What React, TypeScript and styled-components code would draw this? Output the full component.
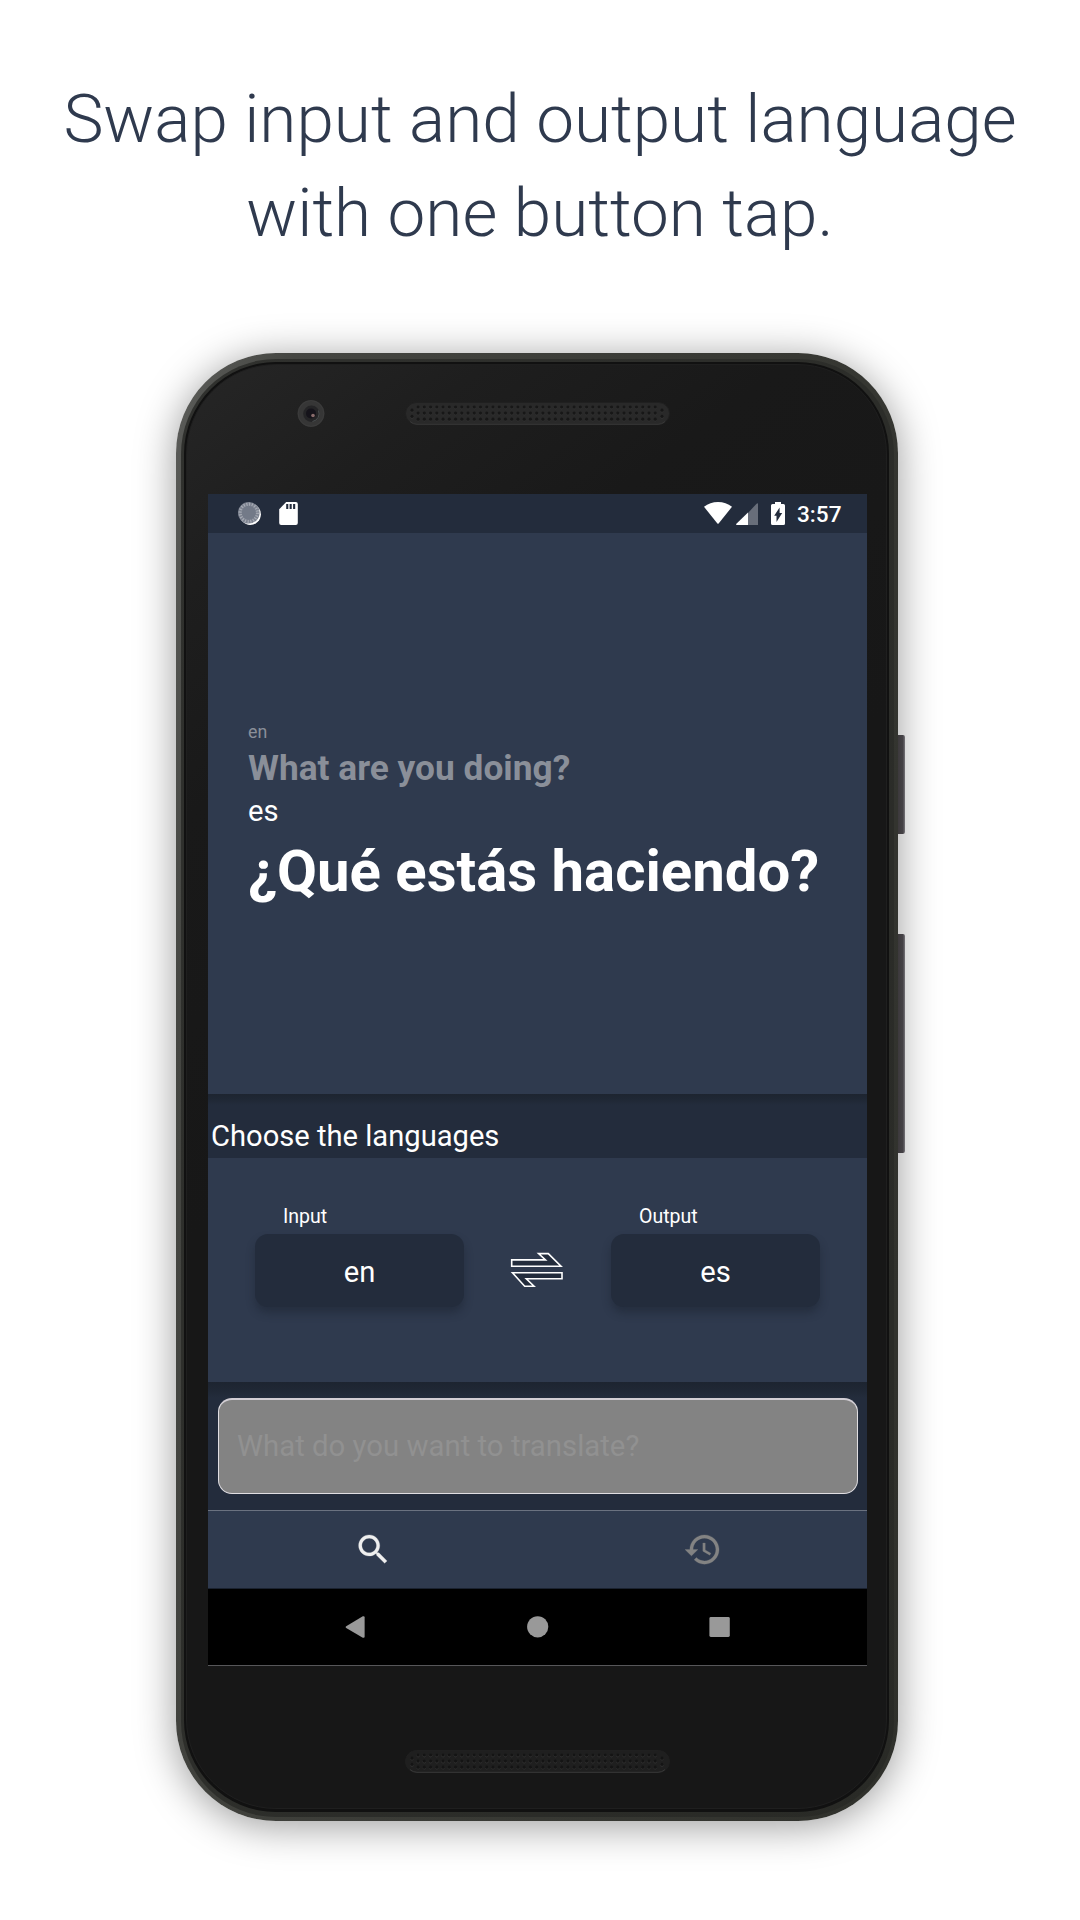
import React from 'react';
import styled, { createGlobalStyle } from 'styled-components';

const navy = '#2f3a4e';
const deep = '#232c3c';

const GlobalStyle = createGlobalStyle`
  * { box-sizing: border-box; }
  body { margin: 0; background: #fff; font-family: Roboto, "Liberation Sans", sans-serif; }
  svg { display: block; flex: none; }
`;

const Page = styled.main`
  width: 1080px;
  height: 1920px;
  overflow: hidden;
  background: #fff;
  display: flex;
  flex-direction: column;
`;

const Headline = styled.h1`
  margin: 0;
  height: 353px;
  padding-top: 72px;
  font-size: 67.45px;
  line-height: 94px;
  font-weight: 300;
  color: ${navy};
  text-align: center;
  white-space: nowrap;
`;

const Device = styled.div`
  display: flex;
  align-items: flex-start;
  padding-left: 176px;
`;

const Rim = styled.div`
  width: 722px;
  height: 1468px;
  padding: 6px 4px 4px 5px;
  border-radius: 100px;
  background: linear-gradient(100deg, #5c5d5a 0%, #454642 12%, #3a3b36 50%, #2f302b 100%);
  box-shadow: 0 5px 40px rgba(0, 0, 0, 0.4);
`;

const RimInner = styled.div`
  height: 100%;
  padding: 3px 5px 5px 3px;
  border-radius: 95px;
  background: linear-gradient(110deg, #30312e, #292a26);
`;

const Groove = styled.div`
  height: 100%;
  padding: 2px 2px 3px 2px;
  border-radius: 92px;
  background: #111;
`;

const Face = styled.div`
  height: 100%;
  border-radius: 90px;
  border: 1px solid #1f1f1f;
  background: linear-gradient(143deg, #262626 0, #1e1e1e 180px, #191919 360px, #171717 700px);
  display: flex;
  flex-direction: column;
`;

const TopBezel = styled.div`
  height: 129px;
  flex: none;
  display: flex;
  align-items: flex-start;
  padding: 35px 0 0 110px;
`;

const TopSpeakerSlot = styled.div`
  padding: 2px 0 0 80px;
`;

const BottomBezel = styled.div`
  flex: 1;
  padding: 84px 0 0 218px;
`;

const SideKeys = styled.div`
  display: flex;
  flex-direction: column;
  gap: 100px;
  padding-top: 382px;
`;

const SideKey = styled.div<{ $height: number }>`
  width: 7px;
  height: ${(p) => p.$height}px;
  border-radius: 0 2px 2px 0;
  background: linear-gradient(90deg, #3c393c 0, #454246 70%, #77757a 100%);
`;

const Screen = styled.div`
  width: 659px;
  height: 1172px;
  flex: none;
  margin-left: 21px;
  background: ${navy};
  display: flex;
  flex-direction: column;
  color: #fff;
`;

const StatusBar = styled.div`
  height: 39px;
  flex: none;
  background: ${deep};
  display: flex;
  align-items: flex-start;
  justify-content: space-between;
  padding: 8px 25px 0 30px;
`;

const StatusGroup = styled.div<{ $gap: number }>`
  display: flex;
  align-items: flex-start;
  gap: ${(p) => p.$gap}px;
`;

const Clock = styled.span`
  width: 45px;
  margin-left: 8px;
  padding-top: 1px;
  font-size: 22.6px;
  line-height: 24px;
  font-weight: 500;
  white-space: nowrap;
`;

const Translation = styled.section`
  height: 561px;
  flex: none;
  padding: 189px 0 0 40px;
  display: flex;
  flex-direction: column;
  white-space: nowrap;
`;

const SourceLang = styled.span`
  font-size: 17.8px;
  line-height: 20px;
  color: #8a8f99;
`;

const SourceText = styled.strong`
  margin-top: 5px;
  font-size: 35.3px;
  line-height: 42px;
  font-weight: 700;
  color: #8a8f99;
`;

const TargetLang = styled.span`
  margin-top: 5px;
  font-size: 29.2px;
  line-height: 34px;
`;

const TargetText = styled.strong`
  margin-top: 9px;
  font-size: 58.1px;
  line-height: 68px;
  font-weight: 700;
`;

const SectionTitle = styled.h2`
  margin: 0;
  height: 64px;
  flex: none;
  padding: 25px 0 0 3px;
  font-size: 29.15px;
  line-height: 34px;
  font-weight: 400;
  background: linear-gradient(#1d2430 0, #1f2734 5px, ${deep} 11px);
`;

const Languages = styled.section`
  height: 224px;
  flex: none;
  display: flex;
  justify-content: space-between;
  padding: 47px 47px 0 47px;
`;

const LanguageField = styled.div`
  width: 209px;
`;

const FieldLabel = styled.div`
  height: 29px;
  padding-left: 28px;
  font-size: 19.5px;
  line-height: 23px;
`;

const LanguageButton = styled.button`
  display: block;
  width: 100%;
  height: 73px;
  padding: 3px 0 0 0;
  border: 0;
  border-radius: 13px;
  background: ${deep};
  box-shadow: 0 6px 9px rgba(24, 30, 42, 0.42);
  color: #fff;
  font: 400 29.2px/34px Roboto, "Liberation Sans", sans-serif;
`;

const SwapButton = styled.button`
  padding: 45px 2px 0 0;
  border: 0;
  background: none;
  display: flex;
  align-items: flex-start;
`;

const Composer = styled.div`
  height: 128px;
  flex: none;
  padding: 16px 9px 16px 10px;
  background: linear-gradient(#1d2430 0, #1f2734 7px, ${deep} 16px);
`;

const ComposerInput = styled.input`
  display: block;
  width: 640px;
  height: 96px;
  padding: 0 18px 1px;
  border: 1px solid #e0dee2;
  border-top: 2px solid #d2ced4;
  border-radius: 14px;
  background: #838383;
  font: 400 29.35px/34px Roboto, "Liberation Sans", sans-serif;
  color: #fff;
  &::placeholder { color: #919191; opacity: 1; }
`;

const Tabs = styled.nav`
  height: 79px;
  flex: none;
  display: grid;
  grid-template-columns: 1fr 1fr;
  place-items: center;
  border-top: 1px solid #6b7280;
  border-bottom: 1px solid #1b2230;
`;

const SystemNav = styled.div`
  height: 77px;
  flex: none;
  background: #000;
  border-bottom: 1px solid #57575a;
  display: grid;
  grid-template-columns: repeat(3, 182px);
  justify-content: center;
  justify-items: center;
  align-items: center;
`;

const Camera = () => (
  <svg width="28" height="28" viewBox="0 0 28 28">
    <circle cx="14" cy="13.5" r="13.4" fill="#363636" />
    <circle cx="14" cy="13.5" r="12.8" fill="none" stroke="#3e3e3e" strokeWidth="0.8" />
    <circle cx="14.4" cy="13.7" r="8.2" fill="#242426" />
    <path d="M21.5 10.5a8 8 0 0 1-6 11" fill="none" stroke="#4b4f50" strokeWidth="1" />
    <circle cx="14" cy="13.5" r="5" fill="#15131a" />
    <circle cx="16" cy="15.5" r="1.8" fill="#8a6c6c" />
  </svg>
);

const Speaker = ({ fill, hole }: { fill: string; hole: string }) => {
  const holes: [number, number][] = [[7, 8.2], [7, 14.3], [257, 8.2], [257, 14.3]];
  for (let c = 0; c < 39; c++) {
    for (let r = 0; r < 3; r++) holes.push([13.1 + c * 6.24, 5 + r * 6.1]);
  }
  return (
    <svg width="265" height="23" viewBox="0 0 265 23">
      <rect x="0.5" y="0.5" width="264" height="22" rx="11" fill={fill} stroke="#202020" />
      <path d="M5 19.5Q8 22.3 12 22.3H253Q257 22.3 260 19.5" fill="none" stroke="#383838" />
      {holes.map(([x, y], i) => (
        <g key={i}>
          <circle cx={x} cy={y + 0.6} r="1.8" fill="#343434" />
          <circle cx={x} cy={y} r="1.6" fill={hole} />
        </g>
      ))}
    </svg>
  );
};

const SyncIcon = () => (
  <svg width="24" height="24" viewBox="0 0 24 24">
    <circle cx="12.2" cy="12.3" r="10.7" fill="#fff" />
    <circle cx="10.8" cy="10.8" r="10.8" fill="#7d8390" />
    <circle cx="10.8" cy="10.8" r="8.6" fill="none" stroke="#a9adb6" strokeWidth="3.2" strokeDasharray="1.1 1.602" />
    <circle cx="10.8" cy="10.8" r="7" fill="#737a88" />
  </svg>
);

const SdIcon = () => (
  <svg width="19" height="24" viewBox="0 0 19 24">
    <path d="M7.2 0H16.8Q18.8 0 18.8 2V21Q18.8 23 16.8 23H2.2Q.2 23 .2 21V7.2Z" fill="#fff" />
    <path d="M7.2 2H9.3V7H7.2ZM10.6 2H12.7V7H10.6ZM14.1 2H16.2V7H14.1Z" fill={deep} />
  </svg>
);

const WifiIcon = () => (
  <svg width="28" height="24" viewBox="0 0 28 24">
    <path d="M0 4.8Q6 0 14 0T28 4.8L14.6 21.5Q14 22.2 13.4 21.5Z" fill="#fff" />
  </svg>
);

const SignalIcon = () => (
  <svg width="22" height="24" viewBox="0 0 22 24">
    <path d="M12 11 20.3 1.9Q22 .6 22 2V23H12Z" fill="#686e7a" />
    <path d="M12 10.5V23H.8Q-.5 23 .4 21.8Z" fill="#fff" />
  </svg>
);

const BatteryIcon = () => (
  <svg width="14" height="24" viewBox="0 0 14 24">
    <path d="M4 0H10V2H12.5Q14 2 14 3.5V21.5Q14 23 12.5 23H1.5Q0 23 0 21.5V3.5Q0 2 1.5 2H4Z" fill="#fff" />
    <path d="M8.6 5.5V11H11.2L5.5 20V13.8H3.2Z" fill={deep} />
  </svg>
);

const SwapIcon = () => (
  <svg width="54" height="40" viewBox="0 0 54 40" fill={deep} stroke="#fff" strokeWidth="1.6">
    <path d="M1.7 9.9H35.5L28.6 3.6H38.3L51 16.2H1.7Z" />
    <path d="M3 22.8H52V28.8H16.3L24 36.2H14.7L2.5 22.8Z" />
  </svg>
);

const SearchIcon = () => (
  <svg width="40" height="39" viewBox="-0.3 0 24.3 24" fill="#efefef" stroke="#efefef" strokeWidth="0.15">
    <path d="M15.5 14h-.79l-.28-.27C15.41 12.59 16 11.11 16 9.5 16 5.91 13.09 3 9.5 3S3 5.91 3 9.5 5.91 16 9.5 16c1.61 0 3.09-.59 4.23-1.57l.27.28v.79l5 4.99L20.49 19l-4.99-5zm-6 0C7.01 14 5 11.99 5 9.5S7.01 5 9.5 5 14 7.01 14 9.5 11.99 14 9.5 14z" />
  </svg>
);

const HistoryIcon = () => (
  <svg width="39" height="39" viewBox="-0.2 0 24 24" fill="#838383" stroke="#838383" strokeWidth="0.15">
    <path d="M13 3c-4.97 0-9 4.03-9 9H1l3.89 3.89.07.14L9 12H6c0-3.87 3.13-7 7-7s7 3.13 7 7-3.13 7-7 7c-1.93 0-3.68-.79-4.94-2.06l-1.42 1.42C8.27 19.99 10.51 21 13 21c4.97 0 9-4.03 9-9s-4.03-9-9-9zm-1 5v5l4.28 2.54.72-1.21-3.5-2.08V8H12z" />
  </svg>
);

const BackIcon = () => (
  <svg width="22" height="22" viewBox="0.3 0 22 22">
    <path d="M1.5 10.2 18.1.3Q19.9-.3 19.9 1.3V20.7Q19.9 22.3 18.1 21.7L1.5 11.9Q.3 11 1.5 10.2Z" fill="#999" />
  </svg>
);

const HomeIcon = () => (
  <svg width="22" height="22" viewBox="0.3 0 22 22">
    <circle cx="11" cy="10.8" r="10.6" fill="#999" />
  </svg>
);

const RecentsIcon = () => (
  <svg width="22" height="22" viewBox="0.3 0 22 22">
    <rect x="0.7" y="1" width="20.4" height="20" rx="1.4" fill="#999" />
  </svg>
);

export default function App() {
  return (
    <Page>
      <GlobalStyle />
      <Headline>
        Swap input and output language
        <br />
        with one button tap.
      </Headline>
      <Device>
        <Rim>
          <RimInner>
            <Groove>
              <Face>
                <TopBezel>
                  <Camera />
                  <TopSpeakerSlot>
                    <Speaker fill="#292929" hole="#171717" />
                  </TopSpeakerSlot>
                </TopBezel>
                <Screen>
                  <StatusBar>
                    <StatusGroup $gap={17}>
                      <SyncIcon />
                      <SdIcon />
                    </StatusGroup>
                    <StatusGroup $gap={4}>
                      <WifiIcon />
                      <StatusGroup $gap={13}>
                        <SignalIcon />
                        <BatteryIcon />
                      </StatusGroup>
                      <Clock>3:57</Clock>
                    </StatusGroup>
                  </StatusBar>
                  <Translation>
                    <SourceLang>en</SourceLang>
                    <SourceText>What are you doing?</SourceText>
                    <TargetLang>es</TargetLang>
                    <TargetText>¿Qué estás haciendo?</TargetText>
                  </Translation>
                  <SectionTitle>Choose the languages</SectionTitle>
                  <Languages>
                    <LanguageField>
                      <FieldLabel>Input</FieldLabel>
                      <LanguageButton>en</LanguageButton>
                    </LanguageField>
                    <SwapButton aria-label="Swap">
                      <SwapIcon />
                    </SwapButton>
                    <LanguageField>
                      <FieldLabel>Output</FieldLabel>
                      <LanguageButton>es</LanguageButton>
                    </LanguageField>
                  </Languages>
                  <Composer>
                    <ComposerInput placeholder="What do you want to translate?" />
                  </Composer>
                  <Tabs>
                    <SearchIcon />
                    <HistoryIcon />
                  </Tabs>
                  <SystemNav>
                    <BackIcon />
                    <HomeIcon />
                    <RecentsIcon />
                  </SystemNav>
                </Screen>
                <BottomBezel>
                  <Speaker fill="#1f1f1f" hole="#141414" />
                </BottomBezel>
              </Face>
            </Groove>
          </RimInner>
        </Rim>
        <SideKeys>
          <SideKey $height={99} />
          <SideKey $height={219} />
        </SideKeys>
      </Device>
    </Page>
  );
}
